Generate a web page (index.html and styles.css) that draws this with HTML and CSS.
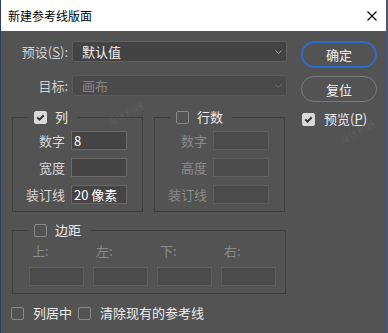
FILE: index.html
```html
<!DOCTYPE html>
<html lang="zh-CN">

<head>
    <meta charset="UTF-8">
    <meta name="viewport" content="width=device-width, initial-scale=1.0">
    <title>新建参考线版面</title>
    <link rel="stylesheet" href="styles.css">
</head>

<body>

    <div class="window">
        <div class="titlebar">
            <span class="title">新建参考线版面</span>
            <svg class="close" width="10" height="10" viewBox="0 0 10 10">
                <path d="M0.5 0.5 L9.5 9.5 M9.5 0.5 L0.5 9.5" stroke="#000" stroke-width="1.1" fill="none" />
            </svg>
        </div>

        <div class="content">
            <div class="main">
                <div class="form">
                    <div class="field-row">
                        <span class="field-label">预设(<u>S</u>):</span>
                        <div class="select">
                            <span>默认值</span>
                            <svg width="7" height="4" viewBox="0 0 7 4"><path d="M0.5 0.5 L3.5 3.5 L6.5 0.5" stroke="#9a9a9a" fill="none" /></svg>
                        </div>
                    </div>
                    <div class="field-row">
                        <span class="field-label">目标:</span>
                        <div class="select is-disabled">
                            <span>画布</span>
                            <svg width="7" height="4" viewBox="0 0 7 4"><path d="M0.5 0.5 L3.5 3.5 L6.5 0.5" stroke="#6a6a6a" fill="none" /></svg>
                        </div>
                    </div>

                    <!-- Columns / rows -->
                    <div class="groups">
                        <fieldset class="group">
                            <legend>
                                <span class="check checked"><svg width="11" height="11" viewBox="0 0 11 11"><path d="M2.3 5.4 L4.5 7.6 L8.7 3.2" stroke="#333" stroke-width="2" fill="none" /></svg></span>
                                <span>列</span>
                            </legend>
                            <div class="group-grid">
                                <label>数字</label>
                                <div class="input">8</div>
                                <label>宽度</label>
                                <div class="input"></div>
                                <label>装订线</label>
                                <div class="input">20 像素</div>
                            </div>
                        </fieldset>
                        <fieldset class="group is-muted">
                            <legend>
                                <span class="check"></span>
                                <span>行数</span>
                            </legend>
                            <div class="group-grid">
                                <label>数字</label>
                                <div class="input is-disabled"></div>
                                <label>高度</label>
                                <div class="input is-disabled"></div>
                                <label>装订线</label>
                                <div class="input is-disabled"></div>
                            </div>
                        </fieldset>
                    </div>

                    <!-- Margins -->
                    <fieldset class="group margins is-muted">
                        <legend>
                            <span class="check"></span>
                            <span>边距</span>
                        </legend>
                        <div class="margin-grid">
                            <label>上:</label>
                            <label>左:</label>
                            <label>下:</label>
                            <label>右:</label>
                            <div class="input is-disabled"></div>
                            <div class="input is-disabled"></div>
                            <div class="input is-disabled"></div>
                            <div class="input is-disabled"></div>
                        </div>
                    </fieldset>
                </div>

                <div class="actions">
                    <button class="btn primary">确定</button>
                    <button class="btn">复位</button>
                    <div class="check-row preview">
                        <span class="check checked"><svg width="11" height="11" viewBox="0 0 11 11"><path d="M2.3 5.4 L4.5 7.6 L8.7 3.2" stroke="#333" stroke-width="2" fill="none" /></svg></span>
                        <span>预览(<u>P</u>)</span>
                    </div>
                </div>
            </div>

            <div class="footer">
                <div class="check-row first">
                    <span class="check"></span>
                    <span>列居中</span>
                </div>
                <div class="check-row">
                    <span class="check"></span>
                    <span>清除现有的参考线</span>
                </div>
            </div>
        </div>

        <span class="watermark wm-left">设计利器</span>
        <span class="watermark wm-right">设计利器</span>
    </div>

</body>

</html>
```

FILE: styles.css
```css
body {
    margin: 0;
    background-color: #535353;
    font-family: "Noto Sans CJK SC", "Noto Sans", sans-serif;
    font-size: 13px;
    color: #d6d6d6;
}

.window {
    position: relative;
    width: 388px;
    height: 333px;
    box-sizing: border-box;
    border-left: 1px solid #313d68;
    border-right: 2px solid #4e5479;
    background-color: #535353;
    overflow: hidden;
}

.titlebar {
    height: 31px;
    display: flex;
    align-items: center;
    justify-content: space-between;
    padding: 0 9px 0 7px;
    background-color: #fff;
    color: #000;
    font-size: 12px;
}

.content {
    padding: 10px 0 0 11px;
}

.main {
    display: flex;
    gap: 13px;
}

.form {
    width: 276px;
    display: flex;
    flex-direction: column;
}

.field-row {
    display: flex;
    align-items: center;
    gap: 4px;
    height: 21px;
}

.field-row + .field-row {
    margin-top: 13px;
}

.field-label {
    width: 56px;
    text-align: right;
    color: #d0d0d0;
}

.select {
    width: 215px;
    height: 21px;
    box-sizing: border-box;
    display: flex;
    align-items: center;
    justify-content: space-between;
    padding: 0 4px 0 9px;
    border: 1px solid #5f5f5f;
    border-radius: 3px;
    background-color: #434343;
    color: #f2f2f2;
}

.select.is-disabled {
    background-color: #4a4a4a;
    border-color: #5a5a5a;
    color: #858585;
}

.groups {
    display: flex;
    gap: 11px;
    margin-top: 14px;
}

fieldset.group {
    width: 131px;
    min-width: 0;
    box-sizing: border-box;
    margin: 0;
    padding: 0 0 7px 0;
    border: 1px solid #3f3f3f;
}

legend {
    display: flex;
    align-items: center;
    gap: 8px;
    height: 14px;
    line-height: 14px;
    margin-left: 15px;
    padding: 0 9px 0 6px;
    color: #ececec;
}

.group-grid {
    display: grid;
    grid-template-columns: 52px 56px;
    column-gap: 6px;
    row-gap: 8px;
    align-items: center;
    padding-top: 7px;
}

.group-grid label {
    text-align: right;
    line-height: 19px;
}

.input {
    height: 19px;
    box-sizing: border-box;
    padding-left: 2px;
    border: 1px solid #686868;
    background-color: #444;
    color: #fff;
    line-height: 17px;
}

.input.is-disabled {
    border-color: #5e5e5e;
    background-color: #4b4b4b;
}

.is-muted label {
    color: #8a8a8a;
}

fieldset.margins {
    width: 274px;
    margin-top: 11px;
}

.margin-grid {
    display: grid;
    grid-template-columns: repeat(4, 55px);
    column-gap: 9px;
    row-gap: 9px;
    padding: 7px 0 0 16px;
}

.margin-grid label {
    padding-left: 3px;
    line-height: 14px;
}

.check {
    flex: none;
    width: 13px;
    height: 13px;
    box-sizing: border-box;
    display: flex;
    align-items: center;
    justify-content: center;
    border: 1px solid #8a8a8a;
    border-radius: 2px;
}

.check.checked {
    background-color: #d9d9d9;
    border-color: #d9d9d9;
}

.actions {
    width: 76px;
    display: flex;
    flex-direction: column;
    align-self: flex-start;
}

.btn {
    height: 26px;
    padding: 0;
    border: 1px solid #7a7a7a;
    border-radius: 13px;
    background: transparent;
    color: #f0f0f0;
    font: inherit;
}

.btn.primary {
    height: 27px;
    border: 2px solid #2c6bd2;
    border-radius: 14px;
}

.btn + .btn {
    margin-top: 8px;
}

.check-row {
    display: flex;
    align-items: center;
    gap: 9px;
    height: 14px;
    line-height: 14px;
    color: #ececec;
}

.preview {
    margin: 10px 0 0 1px;
}

.footer {
    display: flex;
    align-items: center;
    gap: 6px;
    margin-top: 12px;
}

.footer .first {
    margin-left: -1px;
}

.watermark {
    position: absolute;
    font-size: 10px;
    color: rgba(255, 255, 255, 0.07);
    transform: rotate(-28deg);
    white-space: nowrap;
}

.wm-left {
    left: 104px;
    top: 106px;
}

.wm-right {
    left: 336px;
    top: 124px;
}
```
